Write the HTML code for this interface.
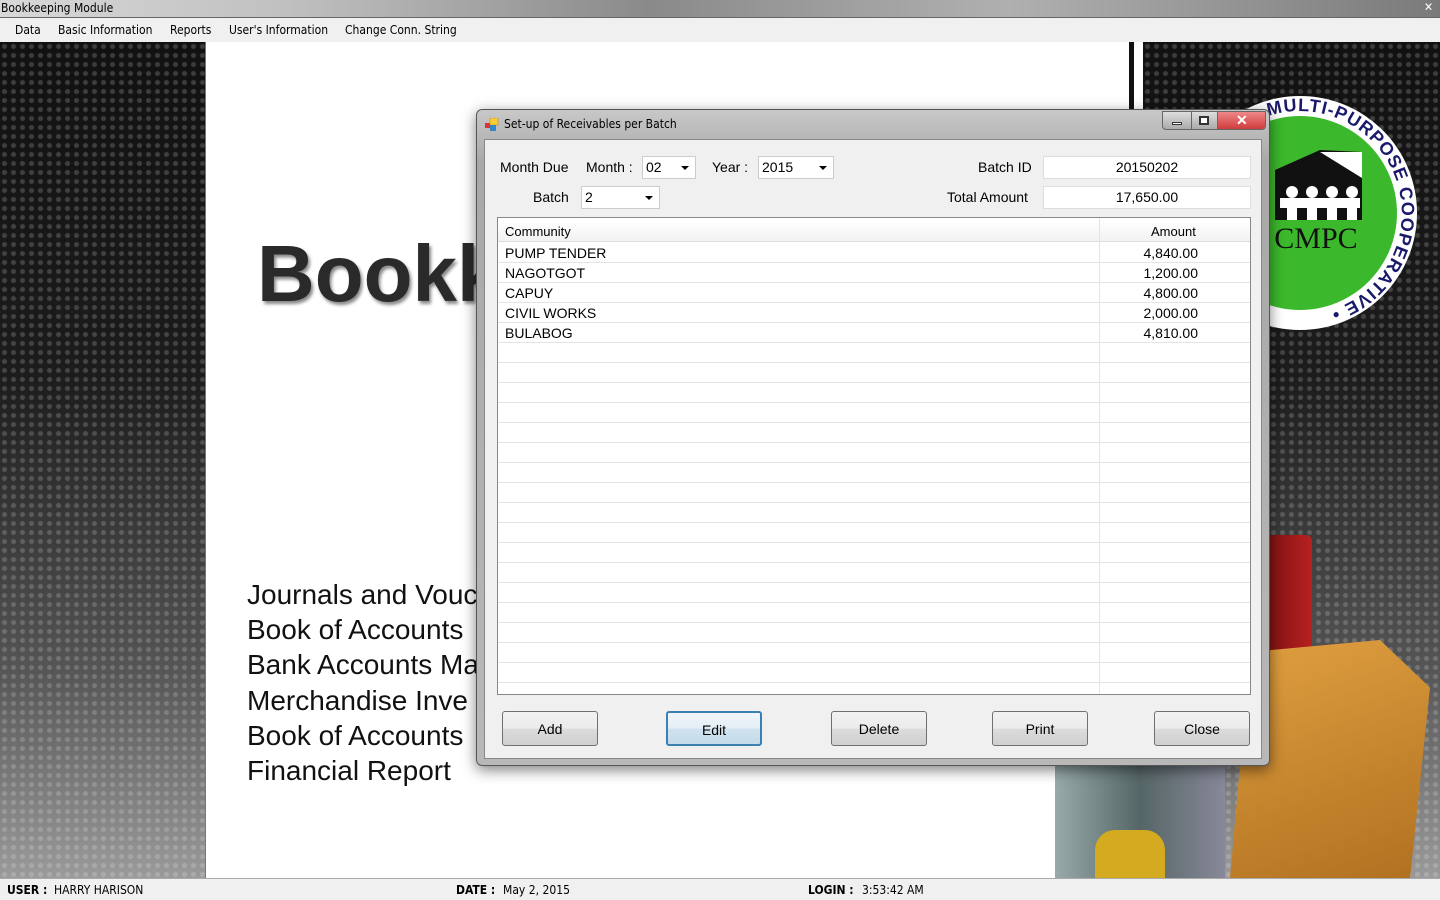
<!DOCTYPE html>
<html><head><meta charset="utf-8"><style>
*{margin:0;padding:0;box-sizing:border-box}
body{width:1440px;height:900px;overflow:hidden;position:relative;font-family:"Liberation Sans",sans-serif;background:#fff}
.tb{position:absolute;left:0;top:0;width:1440px;height:18px;background:linear-gradient(90deg,#d8d8d8 0,#c0c0c0 20%,#8a8a8a 45%,#b0b0b0 70%,#7a7a7a 100%);border-bottom:1px solid #666}
.tb span{position:absolute;left:1px;top:1px;color:#000;font-family:"DejaVu Sans Condensed","Liberation Sans Narrow",sans-serif;font-size:12px}
.menu{position:absolute;top:18px;left:0;width:1440px;height:24px;background:#f0f0f0;font-size:12px;font-family:"DejaVu Sans Condensed",sans-serif}
.menu span{position:absolute;top:5px}
.pat{position:absolute;background-color:#222;
background-image:radial-gradient(circle,rgba(255,255,255,.18) 2px,transparent 3px),linear-gradient(180deg,#111 0%,#1c1c1c 40%,#555 75%,#9a9a9a 100%);
background-size:9px 9px,100% 100%}
.st{position:absolute;top:878px;left:0;width:1440px;height:22px;background:#f0f0f0;border-top:1px solid #aaa;font-size:12px;font-family:"DejaVu Sans Condensed",sans-serif}
.st span{position:absolute;top:4px}
.dlg{position:absolute;left:476px;top:109px;width:794px;height:657px;border:1px solid #555;border-radius:6px;background:linear-gradient(180deg,#c8c8c8,#a8a8a8 8%,#b8b8b8);box-shadow:0 4px 14px rgba(0,0,0,.5)}
.cl{position:absolute;left:7px;top:29px;width:778px;height:620px;background:#f0f0f0;border:1px solid #888}
.lb{position:absolute;font-size:14px;color:#000}
.cb{position:absolute;height:23px;background:#fff;border:1px solid #ccc;font-size:14px;padding:2px 0 0 3px}
.cb:after{content:"";position:absolute;right:6px;top:9px;border-left:4px solid transparent;border-right:4px solid transparent;border-top:4px solid #000}
.tx{position:absolute;height:23px;background:#fff;border:1px solid #ddd;font-size:14px;text-align:center;padding-top:2px}
.grid{position:absolute;left:12px;top:77px;width:754px;height:478px;background:#fff;border:1px solid #888;overflow:hidden}
.row{position:absolute;left:0;width:752px;height:20px;border-bottom:1px solid #e4e4e4;font-size:14px}
.row .a{position:absolute;left:7px;top:2px}.row .b{position:absolute;right:52px;top:2px}
.vd{position:absolute;left:601px;top:0;width:1px;height:478px;background:#e4e4e4}
.btn{position:absolute;top:571px;width:96px;height:35px;border:1px solid #707070;border-radius:3px;background:linear-gradient(180deg,#f2f2f2 0,#ebebeb 50%,#dcdcdc 51%,#cfcfcf 100%);font-size:14px;text-align:center;padding-top:9px}
.big{position:absolute;left:257px;top:228px;font-size:80px;font-weight:bold;font-family:"Liberation Sans",sans-serif;color:#2a2a2a;text-shadow:2px 3px 3px #888}
.lst{position:absolute;left:247px;top:577px;font-size:28px;line-height:35.2px;font-family:"Liberation Sans",sans-serif;color:#111}
</style></head><body>
<div class="tb"><span>Bookkeeping Module</span><span style="left:1424px;top:0;font-weight:bold;color:#fff">✕</span></div>
<div class="menu"><span style="left:15px">Data</span><span style="left:58px">Basic Information</span><span style="left:170px">Reports</span><span style="left:229px">User's Information</span><span style="left:345px">Change Conn. String</span></div>
<div class="pat" style="left:0;top:42px;width:205px;height:836px"></div>
<div style="position:absolute;left:205px;top:42px;width:1px;height:836px;background:#777"></div>
<div class="pat" style="left:1143px;top:42px;width:297px;height:836px"></div>
<div style="position:absolute;left:1129px;top:42px;width:5px;height:70px;background:#111"></div>
<div class="big">Bookk</div>
<div class="lst">Journals and Vouc<br>Book of Accounts<br>Bank Accounts Ma<br>Merchandise Inve<br>Book of Accounts<br>Financial Report</div>
<svg style="position:absolute;left:1180px;top:90px" width="260" height="250" viewBox="0 0 260 250">
<circle cx="120" cy="123" r="117" fill="#fff"/><circle cx="120" cy="123" r="97" fill="#3cb82c"/>
<polygon points="95,80 140,60 182,62 182,130 95,130" fill="#111"/><polygon points="140,62 182,62 182,88" fill="#fff"/>
<g fill="#fff"><circle cx="112" cy="102" r="6"/><circle cx="132" cy="102" r="6"/><circle cx="152" cy="102" r="6"/><circle cx="172" cy="102" r="6"/>
<rect x="100" y="108" width="80" height="10"/><rect x="107" y="116" width="10" height="14"/><rect x="127" y="116" width="10" height="14"/><rect x="147" y="116" width="10" height="14"/><rect x="167" y="116" width="10" height="14"/></g>
<text x="136" y="158" font-family="Liberation Serif,serif" font-size="30" text-anchor="middle" fill="#111">CMPC</text>
<path id="ar" d="M88.5,26 A102,102 0 1 1 137.7,223.5" fill="none"/>
<text font-family="Liberation Sans" font-weight="bold" font-size="18" fill="#1a1a6a" letter-spacing="1"><textPath href="#ar">MULTI-PURPOSE COOPERATIVE • BA</textPath></text>
</svg>
<div style="position:absolute;left:1262px;top:535px;width:50px;height:200px;background:linear-gradient(90deg,#7a1010,#b82020);border-radius:6px"></div>
<div style="position:absolute;left:1230px;top:640px;width:200px;height:238px;background:linear-gradient(160deg,#e0a040,#b07020);clip-path:polygon(10% 5%,75% 0,100% 20%,90% 100%,0 100%)"></div>
<div style="position:absolute;left:1055px;top:766px;width:170px;height:112px;background:linear-gradient(90deg,#9aa,#566,#889)"></div>
<div style="position:absolute;left:1095px;top:830px;width:70px;height:48px;background:#d4aa20;border-radius:20px 20px 0 0"></div>
<div class="dlg">
<svg style="position:absolute;left:8px;top:8px" width="14" height="14"><rect x="0" y="5" width="5" height="5" fill="#d33"/><rect x="5" y="0" width="8" height="7" fill="#fc3" stroke="#a80" stroke-width=".5"/><rect x="5" y="7" width="6" height="6" fill="#38c"/></svg>
<div style="position:absolute;left:27px;top:7px;font-size:12px;font-family:'DejaVu Sans Condensed',sans-serif">Set-up of Receivables per Batch</div>
<div style="position:absolute;left:685px;top:1px;width:104px;height:19px;border:1px solid #666;border-radius:0 0 4px 4px;overflow:hidden;background:linear-gradient(#ddd,#aaa)">
<div style="position:absolute;left:28px;top:0;width:1px;height:19px;background:#666"></div><div style="position:absolute;left:54px;top:0;width:1px;height:19px;background:#666"></div>
<div style="position:absolute;left:55px;top:0;width:49px;height:19px;background:linear-gradient(#e88,#c33)"></div>
<div style="position:absolute;left:9px;top:10px;width:10px;height:3px;background:#fff;border:1px solid #333"></div>
<div style="position:absolute;left:36px;top:4px;width:10px;height:9px;border:2px solid #333;background:#fff"></div>
<div style="position:absolute;left:73px;top:0;color:#fff;font-weight:bold;font-size:14px">✕</div></div>
<div class="cl">
<div class="lb" style="left:15px;top:19px">Month Due</div>
<div class="lb" style="left:101px;top:19px">Month :</div>
<div class="cb" style="left:157px;top:16px;width:54px">02</div>
<div class="lb" style="left:227px;top:19px">Year :</div>
<div class="cb" style="left:273px;top:16px;width:76px">2015</div>
<div class="lb" style="left:48px;top:49px">Batch</div>
<div class="cb" style="left:96px;top:46px;width:79px">2</div>
<div class="lb" style="left:493px;top:19px">Batch ID</div>
<div class="tx" style="left:558px;top:16px;width:208px">20150202</div>
<div class="lb" style="left:462px;top:49px">Total Amount</div>
<div class="tx" style="left:558px;top:46px;width:208px">17,650.00</div>
<div class="grid">
<div style="position:absolute;left:0;top:3px;width:752px;height:21px;background:linear-gradient(#fff,#f2f2f2);border-bottom:1px solid #ddd;font-size:13px"><span style="position:absolute;left:7px;top:3px">Community</span><span style="position:absolute;left:653px;top:3px">Amount</span></div>
<div class="vd"></div>
<div class="row" style="top:25px"><span class="a">PUMP TENDER</span><span class="b">4,840.00</span></div>
<div class="row" style="top:45px"><span class="a">NAGOTGOT</span><span class="b">1,200.00</span></div>
<div class="row" style="top:65px"><span class="a">CAPUY</span><span class="b">4,800.00</span></div>
<div class="row" style="top:85px"><span class="a">CIVIL WORKS</span><span class="b">2,000.00</span></div>
<div class="row" style="top:105px"><span class="a">BULABOG</span><span class="b">4,810.00</span></div>
<div class="row" style="top:125px"></div><div class="row" style="top:145px"></div><div class="row" style="top:165px"></div><div class="row" style="top:185px"></div><div class="row" style="top:205px"></div><div class="row" style="top:225px"></div><div class="row" style="top:245px"></div><div class="row" style="top:265px"></div><div class="row" style="top:285px"></div><div class="row" style="top:305px"></div><div class="row" style="top:325px"></div><div class="row" style="top:345px"></div><div class="row" style="top:365px"></div><div class="row" style="top:385px"></div><div class="row" style="top:405px"></div><div class="row" style="top:425px"></div><div class="row" style="top:445px"></div>
</div>
<div class="btn" style="left:17px">Add</div>
<div class="btn" style="left:181px;border:2px solid #3c7fb1;background:linear-gradient(180deg,#f0f6fa,#e4eef5 50%,#d0e2ef 51%,#c4dbea)">Edit</div>
<div class="btn" style="left:346px">Delete</div>
<div class="btn" style="left:507px">Print</div>
<div class="btn" style="left:669px">Close</div>
</div></div>
<div class="st"><span style="left:7px;font-weight:bold">USER :</span><span style="left:54px">HARRY HARISON</span><span style="left:456px;font-weight:bold">DATE :</span><span style="left:503px">May 2, 2015</span><span style="left:808px;font-weight:bold">LOGIN :</span><span style="left:862px">3:53:42 AM</span></div>
</body></html>
